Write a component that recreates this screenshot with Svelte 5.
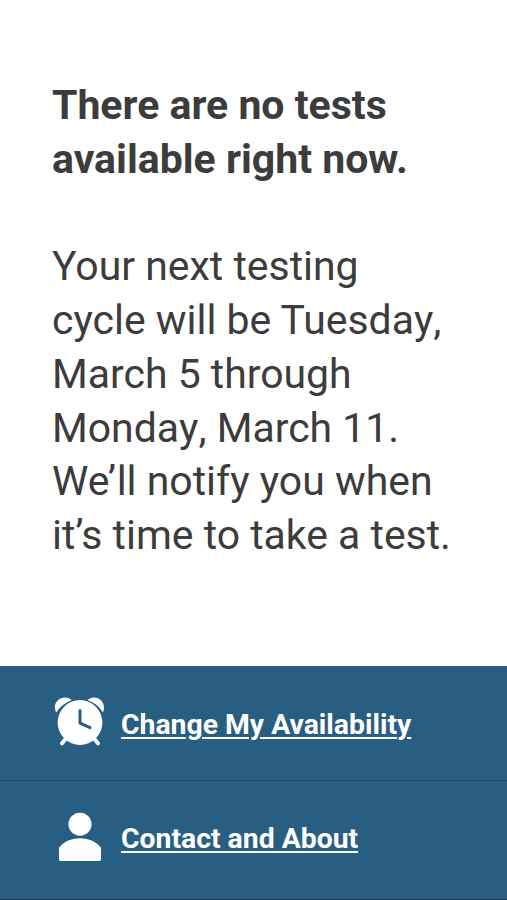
<script>
const message = [
  ["Your next testing"],
  ["cycle will be Tuesda", "y,", ""],
  ["March 5 through"],
  ["Monda", "y,", " March 11."],
  ["We’ll notify you when"],
  ["it’s time to take a test."]
];

const links = [
  { icon: "clock", label: "Change My Availability" },
  { icon: "person", label: "Contact and About" }
];
</script>

<div class="screen">
    <main>
        <h1>There are no tests<br>available right now.</h1>
        <p>
            {#each message as [start, pair, end]}
                <span class="line">{start}{#if pair}<span class="loose">{pair}</span>{end}{/if}</span>
            {/each}
        </p>
    </main>
    <nav>
        {#each links as link}
            <a href="#{link.icon}" class={link.icon}>
                <svg viewBox="0 0 52 52" aria-hidden="true">
                    {#if link.icon === "clock"}
                        <circle class="fill" cx="26" cy="26.500" r="22.4" />
                        <path class="fill" d="M2.200 16.500C-1.800 9.500 3.500 1.600 11 1.600c2.800 0 5 1 6.600 2.600C10.800 6.700 5.500 11 2.200 16.500Z" />
                        <path class="fill" d="M48.800 16.500C52.500 9.500 47.500 1.600 40 1.600c-2.500 0-4.700 1-6.300 2.600C41 6.700 45.700 11 48.800 16.500Z" />
                        <path class="leg" d="M12 42.500l-4 4.800M40 42.500l4 4.800" />
                        <path class="hands" d="M26 14.500V27.200L36 31.700" />
                    {:else}
                        <circle class="fill" cx="26" cy="14.200" r="11.500" />
                        <path class="fill" d="M5 39.500c0-1.500 .2-2.400 1.200-3.300C11.500 31 18 28.300 26 28.300s14.500 2.700 19.800 7.900c1 .9 1.200 1.800 1.200 3.300v9.700c0 1-.7 1.700-1.700 1.700H6.700c-1 0-1.700-.7-1.700-1.700Z" />
                    {/if}
                </svg>
                <span>{link.label}</span>
            </a>
        {/each}
    </nav>
</div>

<style>
    :global(body) {
        background: #fff;
    }

    .screen {
        display: flex;
        flex-direction: column;
        box-sizing: border-box;
        height: 900px;
        overflow: hidden;
        border-bottom: 1px solid #17354f;
        font-family: Roboto, sans-serif;
        color: #3c3c3c;
    }

    main {
        flex: 1;
        padding: 79px 0 0 52px;
    }

    h1, p {
        margin: 0;
        font-size: 41px;
        line-height: 53.75px;
        white-space: nowrap;
    }

    h1 {
        font-weight: 700;
        margin-bottom: 53.75px;
    }

    p {
        font-size: 40.95px;
        font-weight: 400;
    }

    .line {
        display: block;
    }

    .loose {
        font-kerning: none;
    }

    nav {
        display: flex;
        flex-direction: column;
        height: 233px;
        background: #285e82;
    }

    a {
        display: flex;
        align-items: flex-start;
        gap: 15px;
        box-sizing: border-box;
        height: 114px;
        padding: 30px 0 0 54px;
        color: #fff;
        font-size: 28.35px;
        line-height: 34px;
        font-weight: 700;
        text-decoration: none;
    }

    a.person {
        height: 119px;
        padding-top: 29px;
        border-top: 1px solid #1d4a68;
    }

    a > span {
        padding-top: 12px;
        text-decoration: underline;
        text-decoration-thickness: 2px;
        text-underline-offset: 3px;
    }

    svg {
        width: 52px;
        height: 52px;
        flex: none;
    }

    .fill {
        fill: #fff;
    }

    .leg {
        fill: none;
        stroke: #fff;
        stroke-width: 4;
        stroke-linecap: round;
    }

    .hands {
        fill: none;
        stroke: #285e82;
        stroke-width: 3;
        stroke-linecap: round;
        stroke-linejoin: round;
    }
</style>
